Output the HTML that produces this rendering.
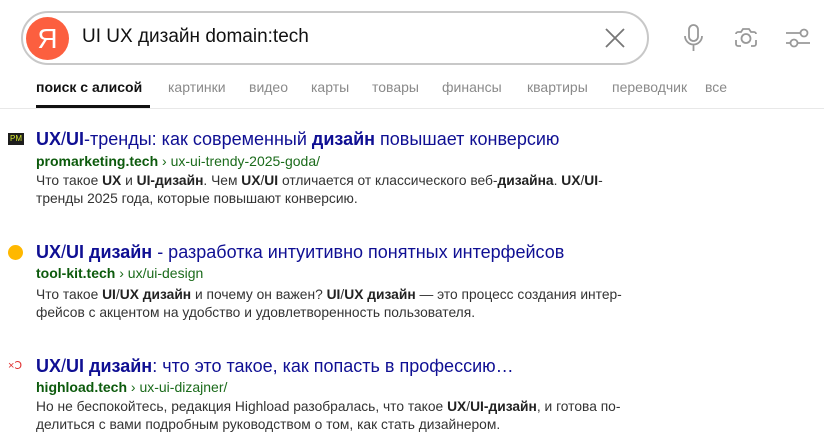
<html><head><style>
body{margin:0;width:824px;height:447px;background:#fff;font-family:"Liberation Sans",Arial,sans-serif;position:relative;overflow:hidden}
.a{position:absolute;white-space:nowrap}
.box{left:21px;top:11px;width:624px;height:50px;border:2px solid #c8c8c8;border-radius:27px}
.logo{left:26px;top:17px;width:43px;height:43px;border-radius:50%;background:#fc5f3f;color:#fff;font-size:28px;text-align:center;line-height:43px}
.q{left:82px;top:26px;font-size:19px;color:#111}
.tab{top:79px;font-size:14px;color:#8a8a8a}
.t{font-size:18px;color:#0f0f93;left:36px}
.u{font-size:14px;color:#1b6b1b;left:36px}
.u b{color:#0c5a0c}
.s{font-size:13.8px;color:#333;left:36px;line-height:18px}
b{font-weight:bold}
.s b{color:#222}
</style></head><body>
<div class="a box"></div>
<div class="a logo">Я</div>
<div class="a q">UI UX дизайн domain:tech</div>
<svg class="a" style="left:604px;top:27px" width="22" height="22"><path d="M2 2L20 20M20 2L2 20" stroke="#777" stroke-width="1.8"/></svg>
<svg class="a" style="left:682px;top:24px" width="24" height="28" fill="none" stroke="#999" stroke-width="1.8"><rect x="7" y="1" width="9" height="16" rx="4.5"/><path d="M3 12a8.5 8.5 0 0 0 17 0M11.5 21v6"/></svg>
<svg class="a" style="left:733px;top:26px" width="26" height="24" fill="none" stroke="#999" stroke-width="1.8"><path d="M3 8a2 2 0 0 1 2-2h3l2-3h6l2 3h3a2 2 0 0 1 2 2M3 14v4a2 2 0 0 0 2 2h3M23 14v4a2 2 0 0 1-2 2h-3"/><circle cx="13" cy="12.5" r="4.5"/></svg>
<svg class="a" style="left:785px;top:26px" width="26" height="24" fill="none" stroke="#999" stroke-width="1.8"><path d="M1 7h14M1 17h4M13 17h12"/><circle cx="19" cy="7" r="3.5"/><circle cx="9" cy="17" r="3.5"/></svg>
<div class="a tab" style="left:36px;color:#111;font-weight:bold">поиск с алисой</div>
<div class="a tab" style="left:168px">картинки</div>
<div class="a tab" style="left:249px">видео</div>
<div class="a tab" style="left:311px">карты</div>
<div class="a tab" style="left:372px">товары</div>
<div class="a tab" style="left:442px">финансы</div>
<div class="a tab" style="left:527px">квартиры</div>
<div class="a tab" style="left:612px">переводчик</div>
<div class="a tab" style="left:705px">все</div>
<div class="a" style="left:36px;top:105px;width:114px;height:3px;background:#111"></div>
<div class="a" style="left:0;top:108px;width:824px;height:1px;background:#e8e8e8"></div>

<div class="a" style="left:8px;top:133px;width:16px;height:12px;background:#1d1d1d;color:#d6e830;font-size:8px;line-height:12px;text-align:center">PM</div>
<div class="a t" style="top:129px"><b>UX</b>/<b>UI</b>-тренды: как современный <b>дизайн</b> повышает конверсию</div>
<div class="a u" style="top:153px"><b>promarketing.tech</b> › ux-ui-trendy-2025-goda/</div>
<div class="a s" style="top:172px">Что такое <b>UX</b> и <b>UI-дизайн</b>. Чем <b>UX</b>/<b>UI</b> отличается от классического веб-<b>дизайна</b>. <b>UX</b>/<b>UI</b>-<br>тренды 2025 года, которые повышают конверсию.</div>

<div class="a" style="left:8px;top:245px;width:15px;height:15px;border-radius:50%;background:#ffb800"></div>
<div class="a t" style="top:242px"><b>UX</b>/<b>UI дизайн</b> - разработка интуитивно понятных интерфейсов</div>
<div class="a u" style="top:265px"><b>tool-kit.tech</b> › ux/ui-design</div>
<div class="a s" style="top:286px">Что такое <b>UI</b>/<b>UX дизайн</b> и почему он важен? <b>UI</b>/<b>UX дизайн</b> — это процесс создания интер-<br>фейсов с акцентом на удобство и удовлетворенность пользователя.</div>

<div class="a" style="left:8px;top:359px;color:#e03030;font-size:11px">×Ↄ</div>
<div class="a t" style="top:356px"><b>UX</b>/<b>UI дизайн</b>: что это такое, как попасть в профессию…</div>
<div class="a u" style="top:379px"><b>highload.tech</b> › ux-ui-dizajner/</div>
<div class="a s" style="top:398px">Но не беспокойтесь, редакция Highload разобралась, что такое <b>UX</b>/<b>UI-дизайн</b>, и готова по-<br>делиться с вами подробным руководством о том, как стать дизайнером.</div>
</body></html>
